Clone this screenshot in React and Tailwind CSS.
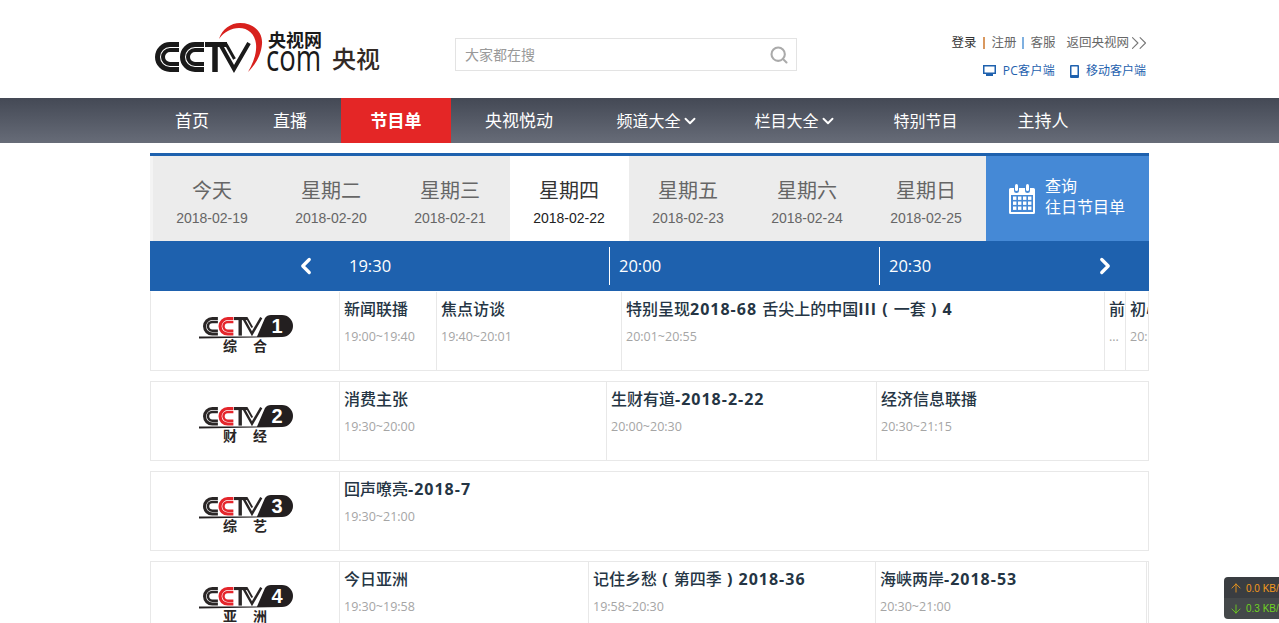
import {ChevronDown, ChevronLeft, ChevronRight, ChevronsRight, Search, ArrowUp, ArrowDown} from 'lucide-react';

const sans = 'font-["Liberation_Sans","Noto_Sans_CJK_SC",sans-serif]';
const yahei = 'font-["Open_Sans","Noto_Sans_CJK_SC",sans-serif]';

const navItems = [
    {label: '首页', w: 'w-[98px]'},
    {label: '直播', w: 'w-[98px]'},
    {label: '节目单', w: 'w-[110px] ml-[2px] bg-[#e42626] font-bold'},
    {label: '央视悦动', w: 'w-[136px]'},
    {label: '频道大全', w: 'w-[138px] pl-[3px] text-[16px]', more: true},
    {label: '栏目大全', w: 'w-[138px] pl-[3px] text-[16px]', more: true},
    {label: '特别节目', w: 'w-[125px] text-[16px]'},
    {label: '主持人', w: 'w-[110px]'},
];

const days = [
    {name: '今天', date: '2018-02-19'},
    {name: '星期二', date: '2018-02-20'},
    {name: '星期三', date: '2018-02-21'},
    {name: '星期四', date: '2018-02-22', active: true},
    {name: '星期五', date: '2018-02-23'},
    {name: '星期六', date: '2018-02-24'},
    {name: '星期日', date: '2018-02-25'},
];

const channels = [
    {
        num: '1', left: '综', right: '合', programs: [
            {title: '新闻联播', time: '19:00~19:40', w: 'w-[97px]'},
            {title: '焦点访谈', time: '19:40~20:01', w: 'w-[185px]'},
            {title: '特别呈现2018-68 舌尖上的中国III ( 一套 ) 4', time: '20:01~20:55', w: 'w-[483px]'},
            {title: '前', time: '...', w: 'w-[21px]'},
            {title: '初心', time: '20:55', w: 'w-[40px]'},
        ],
    },
    {
        num: '2', left: '财', right: '经', programs: [
            {title: '消费主张', time: '19:30~20:00', w: 'w-[267px]'},
            {title: '生财有道-2018-2-22', time: '20:00~20:30', w: 'w-[270px]'},
            {title: '经济信息联播', time: '20:30~21:15', w: 'w-[272px]', last: true},
        ],
    },
    {
        num: '3', left: '综', right: '艺', programs: [
            {title: '回声嘹亮-2018-7', time: '19:30~21:00', w: 'w-[808px]', last: true},
        ],
    },
    {
        num: '4', left: '亚', right: '洲', programs: [
            {title: '今日亚洲', time: '19:30~19:58', w: 'w-[249px]'},
            {title: '记住乡愁 ( 第四季 ) 2018-36', time: '19:58~20:30', w: 'w-[287px]'},
            {title: '海峡两岸-2018-53', time: '20:30~21:00', w: 'w-[271px]'},
        ],
    },
];

// C stripes and TV, drawn on a 95x30 box
const CctvMark = ({x = 0, y = 0, scale = 1, accent = '#1a1a1a', fg = '#1a1a1a'}) => (
    <g transform={`translate(${x} ${y}) scale(${scale})`} fill="none">
        <path d="M24 2.5 H15 A12.5 12.5 0 0 0 15 27.5 H24" stroke={fg} strokeWidth="5"/>
        <path d="M24 8 H15 A7 7 0 0 0 15 22 H24" stroke={fg} strokeWidth="4"/>
        <path d="M49 2.5 H40 A12.5 12.5 0 0 0 40 27.5 H49" stroke={accent} strokeWidth="5"/>
        <path d="M49 8 H40 A7 7 0 0 0 40 22 H49" stroke={accent} strokeWidth="4"/>
        <path d="M50 2.5 H72" stroke={fg} strokeWidth="5"/>
        <path d="M60 3 V30" stroke={fg} strokeWidth="5.5"/>
        <path d="M65 2 L79 27 L94 1" stroke={fg} strokeWidth="4"/>
        <path d="M71 2 L79.5 17" stroke={fg} strokeWidth="3"/>
    </g>
);

const HeaderLogo = () => (
    <svg width="226" height="52" viewBox="0 0 226 52" className="shrink-0">
        <path d="M64 17 C67 7 76 1 85 1 C99 1 108 10 107 22 C106 34 100 43 93 50 C98 41 102 32 101 22 C100 12 93 6 84 6 C76 6 69 10 64 17 Z" fill="#d8211d"/>
        <CctvMark y="20"/>
        <text x="113" y="25" fontSize="18" fontWeight="700" fill="#1a1a1a" fontFamily="Noto Sans CJK SC">央视网</text>
        <text transform="translate(111 49) scale(1 1.3)" fontSize="27.5" fontWeight="500" fill="#1a1a1a" fontFamily="Open Sans">com</text>
        <text x="177" y="46" fontSize="24" fontWeight="500" fill="#332a25" fontFamily="Noto Sans CJK SC">央视</text>
    </svg>
);

const ChannelLogo = ({num, left, right}) => (
    <svg width="96" height="40" viewBox="0 0 96 40">
        <CctvMark x="6" y="2" scale="0.62" accent="#e4262c" fg="#2a2626"/>
        <path d="M2 21.5 H60 L68 3 Q70 0 74 0 H85 A11 11 0 0 1 85 22 L2 23.5 Z" fill="#231f20"/>
        <text x="80" y="18" fontSize="20" fontWeight="700" fill="#fff" textAnchor="middle" fontFamily="Liberation Sans">{num}</text>
        <text x="26" y="36" fontSize="14" fontWeight="700" fill="#2a2626" fontFamily="Noto Sans CJK SC">{left}</text>
        <text x="56" y="36" fontSize="14" fontWeight="700" fill="#2a2626" fontFamily="Noto Sans CJK SC">{right}</text>
    </svg>
);

const CalendarIcon = () => (
    <svg width="26" height="30" viewBox="0 0 26 30" fill="#fff">
        <path d="M1.5 4 H5 V6.5 A2.5 2.5 0 0 0 10 6.5 V4 H16 V6.5 A2.5 2.5 0 0 0 21 6.5 V4 H24.5 A1.5 1.5 0 0 1 26 5.5 V28.5 A1.5 1.5 0 0 1 24.5 30 H1.5 A1.5 1.5 0 0 1 0 28.5 V5.5 A1.5 1.5 0 0 1 1.5 4 Z M2 11 V28 H24 V11 Z"/>
        <rect x="6" y="0" width="3" height="7" rx="1.5"/>
        <rect x="17" y="0" width="3" height="7" rx="1.5"/>
        {[12.5, 17.5, 22.5].map(y => [4, 9, 14, 19].map(x => (
            <rect key={`${x}-${y}`} x={x} y={y} width="3.4" height="3.4"/>
        )))}
    </svg>
);

const MonitorIcon = () => (
    <svg width="13" height="12" viewBox="0 0 13 12" fill="#1e61ae">
        <path d="M0 0 H13 V9 H0 Z M1.5 1.5 V7.5 H11.5 V1.5 Z" fillRule="evenodd"/>
        <rect x="3" y="9" width="7" height="2"/>
    </svg>
);

const PhoneIcon = () => (
    <svg width="9" height="13" viewBox="0 0 9 13" fill="#1e61ae">
        <path d="M1 0 H8 A1 1 0 0 1 9 1 V12 A1 1 0 0 1 8 13 H1 A1 1 0 0 1 0 12 V1 A1 1 0 0 1 1 0 Z M1.5 1.5 V10 H7.5 V1.5 Z" fillRule="evenodd"/>
    </svg>
);

// Latin parts of a title are bold, the Chinese stays medium
const Title = ({text}) => (
    <>
        {text.split(/([\x20-\x7e]+)/).map((part, i) => (
            i % 2 ? <b key={i} className="font-bold tracking-[1px]">{part}</b> : <span key={i}>{part}</span>
        ))}
    </>
);

const ProgramCell = ({program}) => (
    <div className={`h-full shrink-0 overflow-hidden whitespace-pre pl-[4px] ${program.w} ${program.last ? '' : 'border-r border-[#e8e8e8]'}`}>
        <p className="mt-[4px] h-[26px] text-[16px] font-medium leading-[26px] text-[#253544]"><Title text={program.title}/></p>
        <p className="mt-[5px] text-[12.5px] leading-[20px] text-[#a5a5a5]">{program.time}</p>
    </div>
);

const ChannelRow = ({channel}) => (
    <div className="mb-[10px] flex h-[80px] w-[999px] overflow-hidden border border-[#e8e8e8] first:border-t-transparent">
        <div className="flex w-[189px] shrink-0 justify-center border-r border-[#e8e8e8] pt-[23px]">
            <ChannelLogo num={channel.num} left={channel.left} right={channel.right}/>
        </div>
        {channel.programs.map(program => <ProgramCell key={program.title} program={program}/>)}
    </div>
);

const App = () => {
    return (
        <div className={`relative h-[623px] w-[1279px] overflow-hidden bg-white ${yahei}`}>
            <header className="ml-[150px] flex h-[98px] w-[999px] items-start">
                <div className="ml-[5px] mt-[22px]"><HeaderLogo/></div>
                <div className="ml-[74px] mt-[38px] flex h-[33px] w-[342px] items-center border border-[#e3e3e3] pl-[9px] pr-[7px]">
                    <span className="flex-1 text-[14px] text-[#999]">大家都在搜</span>
                    <Search className="h-[20px] w-[20px] text-[#aaa]" strokeWidth={2.5} aria-hidden="true"/>
                </div>
                <div className="ml-auto mr-[3px] mt-[34px] flex flex-col items-end">
                    <div className="flex h-[18px] items-center text-[12.5px] text-[#666]">
                        <span className="text-[#333]">登录</span>
                        <span className="mx-[6.5px] h-[12px] w-[2px] bg-[#d9985f]"/>
                        <span>注册</span>
                        <span className="mx-[6px] h-[12px] w-[2px] bg-[#7fb0e0]"/>
                        <span>客服</span>
                        <span className="ml-[11px]">返回央视网</span>
                        <ChevronsRight className="-ml-[3px] -mr-[6px] h-[26px] w-[26px] text-[#777]" strokeWidth={1} aria-hidden="true"/>
                    </div>
                    <div className="mt-[10px] flex h-[18px] items-center text-[12px] text-[#1e61ae]">
                        <MonitorIcon/>
                        <span className="ml-[7px] tracking-[0.3px]">PC客户端</span>
                        <span className="ml-[15px]"><PhoneIcon/></span>
                        <span className="ml-[7px]">移动客户端</span>
                    </div>
                </div>
            </header>

            <nav className="h-[45px] bg-gradient-to-b from-[#444955] to-[#676c78]">
                <div className="ml-[143px] flex h-full text-[17px] text-white">
                    {navItems.map(item => (
                        <a key={item.label} className={`flex h-full items-center justify-center ${item.w}`}>
                            {item.label}
                            {item.more && <ChevronDown className="h-[18px] w-[18px]" strokeWidth={2.5} aria-hidden="true"/>}
                        </a>
                    ))}
                </div>
            </nav>

            <main className="ml-[150px] mt-[10px] w-[999px]">
                <div className={`flex h-[88px] border-t-[3px] border-[#1e61ae] bg-[#f4f4f4] pl-[3px] ${sans}`}>
                    {days.map(day => (
                        <div key={day.date} className={`flex w-[119px] flex-col items-center pr-[1px] ${day.active ? 'bg-white' : 'bg-[#ececec]'}`}>
                            <span className={`mt-[19px] font-["Noto_Sans_CJK_SC",sans-serif] text-[20px] leading-[30px] ${day.active ? 'text-[#333]' : 'text-[#666]'}`}>{day.name}</span>
                            <span className={`mt-[4px] text-[14px] leading-[18px] ${day.active ? 'text-[#222]' : 'text-[#666]'}`}>{day.date}</span>
                        </div>
                    ))}
                    <div className="flex flex-1 items-center bg-[#4589d6] pl-[23px] text-white">
                        <CalendarIcon/>
                        <div className="mb-[6px] ml-[10px] font-['Noto_Sans_CJK_SC',sans-serif] text-[16px] leading-[21px]">
                            <p>查询</p>
                            <p>往日节目单</p>
                        </div>
                    </div>
                </div>

                <div className="flex h-[50px] items-center bg-[#1e61ae] text-[16.5px] text-white">
                    <div className="flex w-[459px] items-center pl-[143px]">
                        <ChevronLeft className="h-[26px] w-[26px]" strokeWidth={3} aria-hidden="true"/>
                        <span className="ml-[30px]">19:30</span>
                    </div>
                    <div className="flex h-[38px] w-[270px] items-center border-l border-white pl-[9px]">20:00</div>
                    <div className="flex h-[38px] w-[270px] items-center border-l border-white pl-[9px]">
                        20:30
                        <ChevronRight className="ml-[161px] h-[26px] w-[26px] shrink-0" strokeWidth={3} aria-hidden="true"/>
                    </div>
                </div>

                <div>
                    {channels.map(channel => <ChannelRow key={channel.num} channel={channel}/>)}
                </div>
            </main>

            <div className={`absolute right-0 top-[577px] h-[42px] w-[55px] overflow-hidden rounded-l-[4px] text-[10px] leading-[21px] ${sans}`}>
                <div className="flex h-[21px] items-center whitespace-nowrap bg-[#3a3d41] pl-[5px] text-[#f59a1b]">
                    <ArrowUp className="h-[14px] w-[14px] shrink-0" strokeWidth={1.5} aria-hidden="true"/>
                    <span className="ml-[3px] mt-[2px]">0.0 KB/s</span>
                </div>
                <div className="flex h-[21px] items-center whitespace-nowrap bg-[#44484a] pl-[5px] text-[#6fd21f]">
                    <ArrowDown className="h-[14px] w-[14px] shrink-0" strokeWidth={1.5} aria-hidden="true"/>
                    <span className="ml-[3px]">0.3 KB/s</span>
                </div>
            </div>
        </div>
    );
};

export default App;
